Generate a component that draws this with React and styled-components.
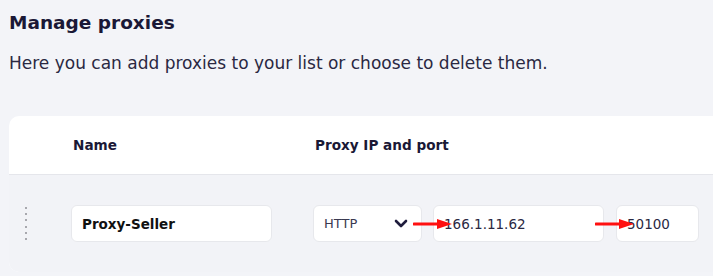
import styled, { createGlobalStyle } from "styled-components";

const Global = createGlobalStyle`
    html, body {
        margin: 0;
        background: #f3f4f8;
        font-family: "DejaVu Sans", "Open Sans", sans-serif;
        color: #1c1a3a;
    }
`;

function Arrow({ left }) {
    return (
        <ArrowSvg style={{ left }} width="40" height="14" viewBox="0 0 40 14">
            <line x1="1" y1="7" x2="26" y2="7" stroke="#ff1010" strokeWidth="3" strokeLinecap="round" />
            <polygon points="24,2 39,7 24,12" fill="#ff1010" />
        </ArrowSvg>
    );
}

function Chevron() {
    return (
        <svg width="14" height="9" viewBox="0 0 14 9">
            <path d="M2 2 L7 7 L12 2" fill="none" stroke="#1f1d3d" strokeWidth="2.6" strokeLinecap="round" strokeLinejoin="round" />
        </svg>
    );
}

function App() {
    return (
        <Page>
            <Global />
            <Title>Manage proxies</Title>
            <Subtitle>Here you can add proxies to your list or choose to delete them.</Subtitle>
            <Card>
                <Header>
                    <HeadCell $width={242}>Name</HeadCell>
                    <HeadCell>Proxy IP and port</HeadCell>
                </Header>
                <Row>
                    <Handle>
                        {[0, 1, 2, 3, 4, 5].map((i) => <Dot key={i} />)}
                    </Handle>
                    <Field $width={201} $gap={41} $bold>Proxy-Seller</Field>
                    <Select>
                        <span>HTTP</span>
                        <Chevron />
                    </Select>
                    <Field $width={171} $gap={12}>166.1.11.62</Field>
                    <Field $width={83}>50100</Field>
                    <Arrow left={404} />
                    <Arrow left={586} />
                </Row>
            </Card>
        </Page>
    );
}

const Page = styled.div`
    padding: 11px 0 0 9px;
    height: 276px;
    box-sizing: border-box;
    overflow: hidden;
`;

const Title = styled.h1`
    margin: 0;
    font-size: 18.5px;
    font-weight: 700;
    line-height: 24px;
    color: #1a1836;
`;

const Subtitle = styled.p`
    margin: 17px 0 0;
    font-size: 17px;
    line-height: 22px;
    color: #2a2842;
`;

const Card = styled.div`
    margin-top: 42px;
    background: #ffffff;
    border-radius: 10px 0 0 10px;
    overflow: hidden;
`;

const Header = styled.div`
    display: flex;
    align-items: center;
    height: 58px;
    padding-left: 64px;
    border-bottom: 1px solid #e5e6eb;
`;

const HeadCell = styled.div`
    width: ${(p) => (p.$width ? `${p.$width}px` : "auto")};
    font-size: 13.6px;
    font-weight: 700;
    color: #1a1836;
`;

const Row = styled.div`
    position: relative;
    display: flex;
    align-items: center;
    height: 97px;
    padding-left: 16px;
    background: #f2f3f7;
`;

const Handle = styled.div`
    display: flex;
    flex-direction: column;
    gap: 4.4px;
    width: 46px;
`;

const Dot = styled.div`
    width: 2px;
    height: 2px;
    border-radius: 50%;
    background: #8f8f96;
`;

const Field = styled.div`
    box-sizing: border-box;
    width: ${(p) => p.$width}px;
    margin-right: ${(p) => p.$gap || 0}px;
    height: 37px;
    display: flex;
    align-items: center;
    padding-left: 10px;
    background: #ffffff;
    border: 1px solid #e7e8ec;
    border-radius: 6px;
    font-size: 13.5px;
    font-weight: ${(p) => (p.$bold ? 700 : 400)};
    color: ${(p) => (p.$bold ? "#111" : "#2a2842")};
`;

const Select = styled.div`
    box-sizing: border-box;
    width: 109px;
    height: 37px;
    margin-right: 11px;
    display: flex;
    align-items: center;
    justify-content: space-between;
    padding: 0 13px 0 10px;
    background: #ffffff;
    border: 1px solid #e7e8ec;
    border-radius: 6px;
    font-size: 13px;
    color: #3a3850;
`;

const ArrowSvg = styled.svg`
    position: absolute;
    top: 42px;
`;

export default App;
